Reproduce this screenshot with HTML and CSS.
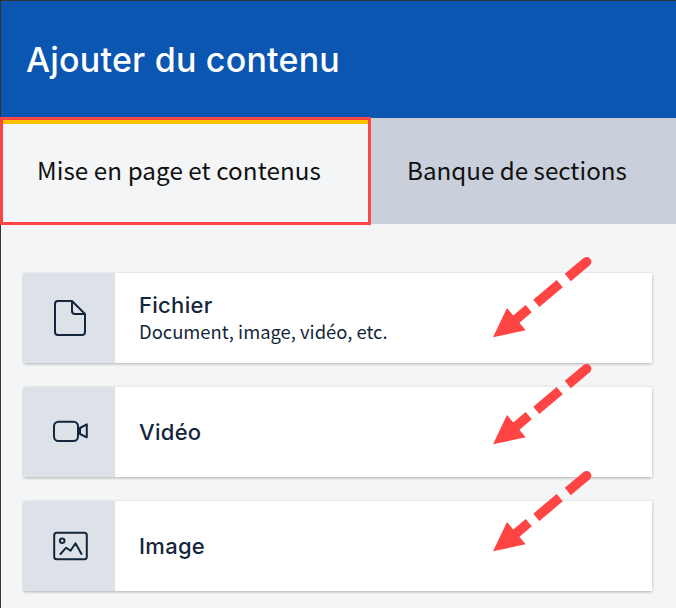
FILE: index.html
```html
<!DOCTYPE html>
<html lang="fr">
<head>
    <meta charset="UTF-8">
    <meta name="viewport" content="width=device-width, initial-scale=1.0">

    <title>Ajouter du contenu</title>

    <link rel="stylesheet" href="styles.css">
</head>
<body>

    <div class="panel">

        <header class="panel-header">
            <h1 class="panel-title">Ajouter du contenu</h1>
        </header>

        <div class="tabs">
            <div class="tab tab-active">Mise en page et contenus</div>
            <div class="tab">Banque de sections</div>
        </div>

        <ul class="block-list">
            <li class="block">
                <div class="block-icon">
                    <svg width="32" height="36" viewBox="0 0 32 36" fill="none" stroke="#14263c" stroke-width="2" stroke-linejoin="round">
                        <path d="M4 1h14l13 13v18a3 3 0 0 1-3 3H4a3 3 0 0 1-3-3V4a3 3 0 0 1 3-3z"/>
                        <path d="M18 1v10a3 3 0 0 0 3 3h10"/>
                    </svg>
                </div>
                <div class="block-text">
                    <div class="block-name">Fichier</div>
                    <div class="block-desc">Document, image, vidéo, etc.</div>
                </div>
            </li>
            <li class="block">
                <div class="block-icon">
                    <svg width="36" height="24" viewBox="0 0 36 24" fill="none" stroke="#14263c" stroke-width="2" stroke-linejoin="round">
                        <rect x="2" y="1.7" width="24" height="19.3" rx="4.5"/>
                        <path d="M28 8l6.8-3.7v13L28 14z"/>
                    </svg>
                </div>
                <div class="block-text">
                    <div class="block-name">Vidéo</div>
                </div>
            </li>
            <li class="block">
                <div class="block-icon">
                    <svg width="36" height="30" viewBox="0 0 36 30" fill="none" stroke="#14263c" stroke-width="2" stroke-linejoin="round" stroke-linecap="round">
                        <rect x="2.2" y="1.7" width="32.6" height="26.6" rx="2.5"/>
                        <circle cx="10.2" cy="9.7" r="2.3"/>
                        <path d="M8.5 23l5.7-6.3 4.3 3 5-7.4 6 10.7"/>
                    </svg>
                </div>
                <div class="block-text">
                    <div class="block-name">Image</div>
                </div>
            </li>
        </ul>

    </div>

    <!-- annotation arrows drawn over the screenshot -->
    <svg class="arrows" width="676" height="608" viewBox="0 0 676 608">
        <defs>
            <g id="arrow">
                <circle class="arrow-cap" cx="586.7" cy="261.7" r="4.7"/>
                <path class="arrow-dash" d="M586.7 261.7L567.8 277.5"/>
                <path class="arrow-dash" d="M559.7 283.7L536.3 303.3"/>
                <path class="arrow-dash" d="M528.7 308.7L510 324.5"/>
                <path class="arrow-head" d="M493 337.3L507 308L525.7 330.3z"/>
            </g>
        </defs>
        <use href="#arrow"/>
        <use href="#arrow" y="107"/>
        <use href="#arrow" y="214"/>
    </svg>

</body>
</html>
```

FILE: styles.css
```css
* {
    box-sizing: border-box;
}
html, body {
    height: 100%;
}
body {
    margin: 0;
    background: #f4f5f7;
    font-family: "Noto Sans CJK SC", "Noto Sans", sans-serif;
    overflow: hidden;
    position: relative;
}
.panel {
    border-top: 1px solid #333;
    border-left: 1px solid #333;
    height: 608px;
}
.panel-header {
    background: #0a56b0;
    height: 117px;
    padding: 0 0 0 25px;
    display: flex;
    align-items: center;
}
.panel-title {
    margin: 0;
    color: #fff;
    font: 500 34px "Inter", sans-serif;
    letter-spacing: 0.2px;
}
.tabs {
    display: flex;
    height: 106px;
    background: #c9d0dc;
}
.tab {
    display: flex;
    align-items: center;
    padding: 0 0 4px 36px;
    font-size: 24.2px;
    color: #111;
}
.tab-active {
    width: 371px;
    margin: -1px 0 -1px -1px;
    padding-left: 34px;
    background: #f4f5f7;
    border: 3px solid #ff4444;
    box-shadow: inset 0 4px 0 #ffc000;
    letter-spacing: 0.08px;
}
.block-list {
    list-style: none;
    margin: 49px 0 0 23px;
    padding: 0;
    width: 628px;
}
.block {
    display: flex;
    height: 90px;
    margin-bottom: 24px;
    background: #fff;
    box-shadow: 0 1px 3px rgba(0, 0, 0, 0.28);
}
.block-icon {
    width: 91px;
    background: #dde2e9;
    display: flex;
    align-items: center;
    justify-content: center;
}
.block-text {
    padding-left: 24px;
    display: flex;
    flex-direction: column;
    justify-content: center;
    color: #14263c;
}
.block-name {
    font: 500 22px/30px "Inter", sans-serif;
    letter-spacing: 0.3px;
}
.block-desc {
    margin: -1px 0 3px;
    font-size: 18.4px;
    line-height: 24px;
}
.arrows {
    position: absolute;
    top: 0;
    left: 0;
    pointer-events: none;
}
.arrow-dash {
    stroke: #ff4444;
    stroke-width: 9.5;
    fill: none;
}
.arrow-cap, .arrow-head {
    fill: #ff4444;
}
```
